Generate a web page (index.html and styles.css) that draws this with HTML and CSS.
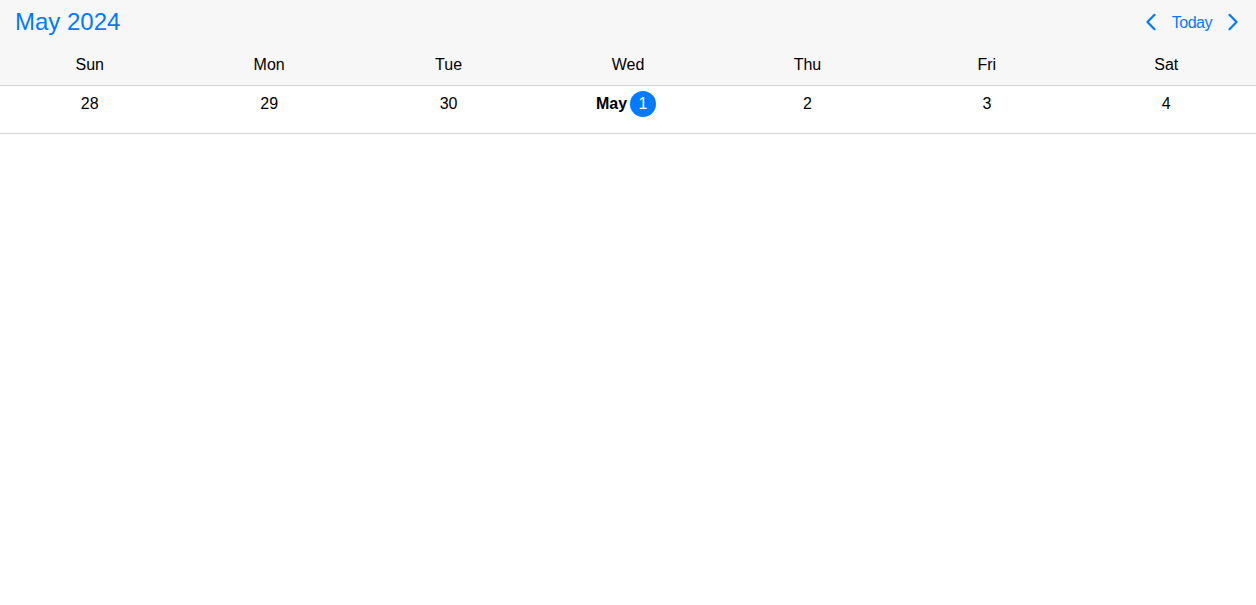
FILE: index.html
```html
<!DOCTYPE html>
<html>
<head>
<meta charset="utf-8">
<link rel="stylesheet" href="styles.css">
</head>
<body>
<div class="cal">
  <div class="head">
    <div class="topbar">
      <div class="title">May 2024</div>
      <div class="nav">
        <svg class="chev prev" width="12" height="18" viewBox="0 0 12 18"><path d="M9.5 1.8 L2.5 9 L9.5 16.2" fill="none" stroke="#007aff" stroke-width="2.2" stroke-linecap="round" stroke-linejoin="round"/></svg>
        <span class="today">Today</span>
        <svg class="chev next" width="12" height="18" viewBox="0 0 12 18"><path d="M2.5 1.8 L9.5 9 L2.5 16.2" fill="none" stroke="#007aff" stroke-width="2.2" stroke-linecap="round" stroke-linejoin="round"/></svg>
      </div>
    </div>
    <div class="weekdays">
      <div>Sun</div><div>Mon</div><div>Tue</div><div>Wed</div><div>Thu</div><div>Fri</div><div>Sat</div>
    </div>
  </div>
  <div class="days">
    <div class="day"><span>28</span></div>
    <div class="day"><span>29</span></div>
    <div class="day"><span>30</span></div>
    <div class="day today-cell"><span class="mon">May</span><span class="dot">1</span></div>
    <div class="day"><span>2</span></div>
    <div class="day"><span>3</span></div>
    <div class="day"><span>4</span></div>
  </div>
</div>
</body>
</html>
```
FILE: styles.css
```css
html, body {
  margin: 0;
  padding: 0;
  background: #ffffff;
  font-family: "Liberation Sans", Arial, sans-serif;
  color: #000;
}
.cal {
  width: 1256px;
}
.head {
  background: #f7f7f7;
  border-bottom: 1px solid #d3d3d3;
}
.topbar {
  height: 44px;
  display: flex;
  align-items: center;
  justify-content: space-between;
  padding: 0 17px 0 15px;
}
.title {
  color: #007aff;
  font-size: 24px;
  line-height: 44px;
}
.nav {
  display: flex;
  align-items: center;
}
.chev {
  display: block;
}
.prev {
  margin-right: 15px;
}
.next {
  margin-left: 15px;
}
.today {
  color: #007aff;
  font-size: 16px;
  letter-spacing: -0.5px;
  padding-top: 1px;
}
.weekdays {
  height: 41px;
  display: grid;
  grid-template-columns: repeat(7, 1fr);
  align-items: center;
  font-size: 16px;
  text-align: center;
}
.weekdays div {
  padding-top: 1px;
}
.days {
  display: grid;
  grid-template-columns: repeat(7, 1fr);
  padding: 5px 0 16px 0;
  border-bottom: 1px solid #d3d3d3;
}
.day {
  height: 26px;
  display: flex;
  align-items: center;
  justify-content: center;
  font-size: 16px;
}
.today-cell {
  padding-right: 4px;
}
.mon {
  font-weight: bold;
  margin-right: 3px;
}
.dot {
  width: 26px;
  height: 26px;
  border-radius: 50%;
  background: #007aff;
  color: #fff;
  display: flex;
  align-items: center;
  justify-content: center;
}
```
